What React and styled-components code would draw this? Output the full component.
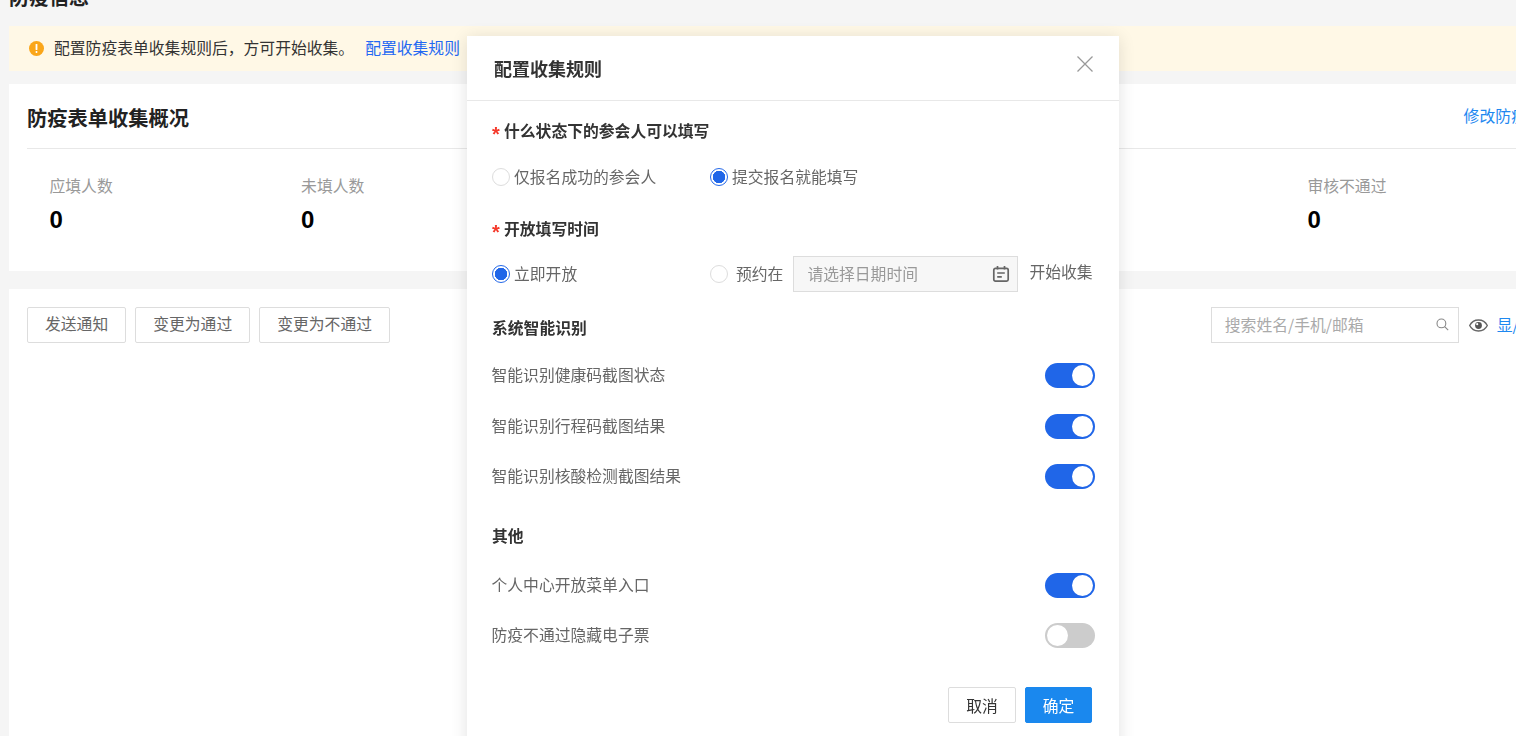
import React from 'react';
import styled, { createGlobalStyle } from 'styled-components';

const GlobalStyle = createGlobalStyle`
    html, body {
        margin: 0;
        height: 100%;
        overflow: hidden;
        background: #f5f5f5;
    }
    body {
        font-family: "Noto Sans CJK SC", "Liberation Sans", sans-serif;
        font-size: 15.8px;
        color: #333;
    }
    * {
        box-sizing: border-box;
    }
`

const Page = styled.div`
    width: 1610px;
    height: 752px;
    margin-left: 9px;
    margin-top: -16px;
    display: flex;
    flex-direction: column;
`

const PageTitle = styled.h2`
    margin: 0 0 16px;
    font-size: 20px;
    line-height: 26px;
    font-weight: 700;
    color: #222;
`

const Notice = styled.div`
    height: 45px;
    padding: 0 0 1px 20px;
    display: flex;
    align-items: center;
    background: #fff8e6;
    color: #333;
    line-height: 24px;
`

const NoticeText = styled.span`
    margin-left: 10px;
`

const NoticeLink = styled.a`
    margin-left: 11px;
    color: #2468f2;
`

const Card = styled.section`
    background: #fff;
    margin-top: ${p => p.$top}px;
    flex: ${p => (p.$grow ? 1 : 'none')};
`

const CardHead = styled.div`
    height: 65px;
    margin: 0 18px;
    display: flex;
    align-items: center;
    justify-content: space-between;
    border-bottom: 1px solid #e8e8e8;
`

const CardTitle = styled.h3`
    margin: 4px 0 0;
    font-size: 20.25px;
    line-height: 28px;
    font-weight: 700;
    color: #222;
`

const HeadLink = styled.a`
    margin-right: 11px;
    padding-bottom: 2px;
    color: #1e88f0;
`

const Stats = styled.div`
    display: grid;
    grid-template-columns: repeat(6, 251.6px);
    padding: 25px 0 35px 40.5px;
`

const Stat = styled.div`
    grid-column: ${p => p.$col};
`

const StatLabel = styled.div`
    line-height: 24px;
    color: #999;
`

const StatValue = styled.div`
    margin-top: 6px;
    font-family: "Liberation Sans", sans-serif;
    font-size: 24px;
    line-height: 32px;
    font-weight: 700;
    color: #000;
`

const Toolbar = styled.div`
    display: flex;
    align-items: center;
    padding: 18px 37px 0 18px;
`

const ToolButton = styled.button`
    height: 36px;
    padding: 0 17px 2px;
    margin-right: 9px;
    font: inherit;
    line-height: 24px;
    color: #666;
    background: #fff;
    border: 1px solid #ddd;
    border-radius: 2px;
`

const ToolRight = styled.div`
    margin-left: auto;
    display: flex;
    align-items: center;
`

const SearchBox = styled.div`
    width: 248px;
    height: 36px;
    padding: 0 9px 2px 13px;
    display: flex;
    align-items: center;
    justify-content: space-between;
    border: 1px solid #ddd;
    color: #aaa;
`

const EyeWrap = styled.span`
    display: flex;
    margin: 0 9px 0 10px;
`

const ColumnLink = styled.a`
    padding-bottom: 2px;
    color: #1e88f0;
`

const Modal = styled.div`
    position: fixed;
    top: 36px;
    left: 467px;
    width: 652px;
    height: 720px;
    background: #fff;
    box-shadow: 0 2px 16px rgba(0, 0, 0, 0.12);
`

const ModalHead = styled.div`
    height: 65px;
    padding: 0 25px 0 27px;
    display: flex;
    align-items: center;
    justify-content: space-between;
    border-bottom: 1px solid #e8e8e8;
`

const ModalTitle = styled.h4`
    margin: 0;
    font-size: 18px;
    line-height: 26px;
    font-weight: 700;
    color: #333;
`

const CloseBtn = styled.span`
    display: flex;
    margin-top: -9px;
`

const ModalBody = styled.div`
    padding: 0 24px 0 25px;
`

const FieldLabel = styled.div`
    margin-top: ${p => p.$top}px;
    height: 24px;
    padding-bottom: 2px;
    display: flex;
    align-items: center;
    font-weight: 700;
    color: #333;
`

const Star = styled.span`
    width: 12px;
    padding-top: 8px;
    font-family: "Liberation Sans", sans-serif;
    font-size: 20px;
    line-height: 18px;
    color: #f5392b;
`

const ChoiceRow = styled.div`
    margin-top: ${p => p.$top}px;
    height: 36px;
    display: grid;
    grid-template-columns: 218px 1fr;
    align-items: center;
`

const Choice = styled.label`
    display: flex;
    align-items: center;
    color: #666;
`

const ChoiceText = styled.span`
    padding-bottom: 2px;
`

const RadioDot = styled.span`
    width: 18px;
    height: 18px;
    margin-right: ${p => p.$gap || 4}px;
    flex: none;
    border-radius: 50%;
    border: 1px solid ${p => (p.$on ? '#2468e8' : '#ddd')};
    background: ${p => (p.$on ? 'radial-gradient(circle, #2066e8 0 6px, #fff 6.5px)' : '#fff')};
`

const DateInput = styled.div`
    width: 225px;
    height: 36px;
    margin-left: 10px;
    padding: 0 7px 0 13px;
    display: flex;
    align-items: center;
    justify-content: space-between;
    background: #f7f7f7;
    border: 1px solid #ddd;
    color: #999;
`

const DateSuffix = styled.span`
    margin-left: 11px;
    padding-bottom: 5px;
    color: #666;
`

const SwitchRow = styled.div`
    margin-top: ${p => p.$top}px;
    height: 25px;
    display: flex;
    align-items: center;
    justify-content: space-between;
    color: #666;
`

const SwitchText = styled.span`
    margin-left: -0.5px;
    padding-bottom: 3px;
`

const Switch = styled.span`
    width: 50px;
    height: 25px;
    padding: 2px;
    display: flex;
    justify-content: ${p => (p.$on ? 'flex-end' : 'flex-start')};
    border-radius: 13px;
    background: ${p => (p.$on ? '#2066e8' : '#ccc')};
`

const Knob = styled.span`
    width: 21px;
    height: 21px;
    border-radius: 50%;
    background: #fff;
`

const ModalFoot = styled.div`
    margin-top: 39px;
    padding-right: 3px;
    display: flex;
    justify-content: flex-end;
    gap: 9px;
`

const FootButton = styled.button`
    width: ${p => p.$width}px;
    height: 36px;
    padding: 0;
    font: inherit;
    border-radius: 2px;
    color: ${p => (p.$primary ? '#fff' : '#333')};
    background: ${p => (p.$primary ? '#1a88ee' : '#fff')};
    border: 1px solid ${p => (p.$primary ? '#1a88ee' : '#ddd')};
`

const WarnIcon = () => (
    <svg width="15" height="15" viewBox="0 0 15 15">
        <circle cx="7.5" cy="7.5" r="7.5" fill="#faa61a" />
        <rect x="6.6" y="3" width="1.8" height="6" rx="0.6" fill="#fff" />
        <rect x="6.6" y="10" width="1.8" height="1.9" rx="0.6" fill="#fff" />
    </svg>
);

const CloseIcon = () => (
    <svg width="18" height="18" viewBox="0 0 18 18" fill="none" stroke="#999" strokeWidth="1.3">
        <path d="M1.5 1.5l15 15M16.5 1.5l-15 15" />
    </svg>
);

const CalendarIcon = () => (
    <svg width="18" height="18" viewBox="0 0 18 18" fill="none" stroke="#666" strokeWidth="1.7">
        <rect x="1.8" y="3.4" width="14.4" height="12.8" rx="1.6" />
        <path d="M5.5 1v3.6M12.5 1v3.6M5.2 8h7.6M5.2 11.8h4.6" />
    </svg>
);

const SearchIcon = () => (
    <svg width="13" height="13" viewBox="0 0 13 13" fill="none" stroke="#888" strokeWidth="1.1">
        <circle cx="5.4" cy="5.4" r="4.4" />
        <path d="M8.6 8.6l3.6 3.6" />
    </svg>
);

const EyeIcon = () => (
    <svg width="19" height="13" viewBox="0 0 19 13">
        <path d="M9.5 1C5.5 1 2.3 3.3.7 6.5 2.3 9.7 5.5 12 9.5 12s7.2-2.3 8.8-5.5C16.7 3.3 13.5 1 9.5 1z" fill="none" stroke="#666" strokeWidth="1.4" />
        <circle cx="9.5" cy="6.5" r="3.4" fill="#555" />
        <circle cx="8.2" cy="5.2" r="1.1" fill="#fff" />
    </svg>
);

const stats = [
    { label: '应填人数', value: 0, col: 1 },
    { label: '未填人数', value: 0, col: 2 },
    { label: '审核不通过', value: 0, col: 6 },
];

const App = () => (
    <>
        <GlobalStyle />
        <Page>
            <PageTitle>防疫信息</PageTitle>
            <Notice>
                <WarnIcon />
                <NoticeText>配置防疫表单收集规则后，方可开始收集。</NoticeText>
                <NoticeLink>配置收集规则</NoticeLink>
            </Notice>

            <Card $top={13}>
                <CardHead>
                    <CardTitle>防疫表单收集概况</CardTitle>
                    <HeadLink>修改防疫表单规则</HeadLink>
                </CardHead>
                <Stats>
                    {stats.map(s => (
                        <Stat key={s.label} $col={s.col}>
                            <StatLabel>{s.label}</StatLabel>
                            <StatValue>{s.value}</StatValue>
                        </Stat>
                    ))}
                </Stats>
            </Card>

            <Card $top={18} $grow>
                <Toolbar>
                    <ToolButton>发送通知</ToolButton>
                    <ToolButton>变更为通过</ToolButton>
                    <ToolButton>变更为不通过</ToolButton>
                    <ToolRight>
                        <SearchBox>
                            搜索姓名/手机/邮箱
                            <SearchIcon />
                        </SearchBox>
                        <EyeWrap><EyeIcon /></EyeWrap>
                        <ColumnLink>显/隐藏字段</ColumnLink>
                    </ToolRight>
                </Toolbar>
            </Card>
        </Page>

        <Modal>
            <ModalHead>
                <ModalTitle>配置收集规则</ModalTitle>
                <CloseBtn><CloseIcon /></CloseBtn>
            </ModalHead>
            <ModalBody>
                <FieldLabel $top={18}><Star>*</Star>什么状态下的参会人可以填写</FieldLabel>
                <ChoiceRow $top={16}>
                    <Choice><RadioDot /><ChoiceText>仅报名成功的参会人</ChoiceText></Choice>
                    <Choice><RadioDot $on /><ChoiceText>提交报名就能填写</ChoiceText></Choice>
                </ChoiceRow>

                <FieldLabel $top={22}><Star>*</Star>开放填写时间</FieldLabel>
                <ChoiceRow $top={15}>
                    <Choice><RadioDot $on /><ChoiceText>立即开放</ChoiceText></Choice>
                    <Choice>
                        <RadioDot $gap={8} /><ChoiceText>预约在</ChoiceText>
                        <DateInput>
                            <ChoiceText>请选择日期时间</ChoiceText>
                            <CalendarIcon />
                        </DateInput>
                        <DateSuffix>开始收集</DateSuffix>
                    </Choice>
                </ChoiceRow>

                <FieldLabel $top={24}>系统智能识别</FieldLabel>
                <SwitchRow $top={23}><SwitchText>智能识别健康码截图状态</SwitchText><Switch $on><Knob /></Switch></SwitchRow>
                <SwitchRow $top={26}><SwitchText>智能识别行程码截图结果</SwitchText><Switch $on><Knob /></Switch></SwitchRow>
                <SwitchRow $top={25}><SwitchText>智能识别核酸检测截图结果</SwitchText><Switch $on><Knob /></Switch></SwitchRow>

                <FieldLabel $top={35}>其他</FieldLabel>
                <SwitchRow $top={25}><SwitchText>个人中心开放菜单入口</SwitchText><Switch $on><Knob /></Switch></SwitchRow>
                <SwitchRow $top={25}><SwitchText>防疫不通过隐藏电子票</SwitchText><Switch><Knob /></Switch></SwitchRow>

                <ModalFoot>
                    <FootButton $width={68}>取消</FootButton>
                    <FootButton $width={67} $primary>确定</FootButton>
                </ModalFoot>
            </ModalBody>
        </Modal>
    </>
);

export default App;
